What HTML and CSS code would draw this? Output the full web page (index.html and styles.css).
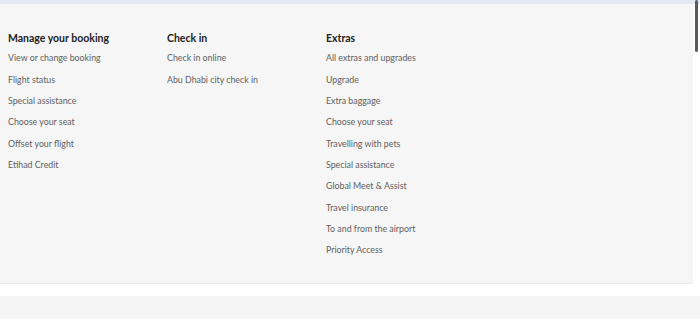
FILE: index.html
```html
<!DOCTYPE html>
<html lang="en">
<head>
  <meta charset="UTF-8">
  <meta name="viewport" content="width=device-width, initial-scale=1.0">
  <title>Manage your booking</title>
  <link rel="stylesheet" href="styles.css">
</head>
<body>
  <div class="top-strip"></div>

  <nav class="mega-menu">
    <div class="menu-column">
      <h3>Manage your booking</h3>
      <ul>
        <li><a href="#">View or change booking</a></li>
        <li><a href="#">Flight status</a></li>
        <li><a href="#">Special assistance</a></li>
        <li><a href="#">Choose your seat</a></li>
        <li><a href="#">Offset your flight</a></li>
        <li><a href="#">Etihad Credit</a></li>
      </ul>
    </div>

    <div class="menu-column">
      <h3>Check in</h3>
      <ul>
        <li><a href="#">Check in online</a></li>
        <li><a href="#">Abu Dhabi city check in</a></li>
      </ul>
    </div>

    <div class="menu-column">
      <h3>Extras</h3>
      <ul>
        <li><a href="#">All extras and upgrades</a></li>
        <li><a href="#">Upgrade</a></li>
        <li><a href="#">Extra baggage</a></li>
        <li><a href="#">Choose your seat</a></li>
        <li><a href="#">Travelling with pets</a></li>
        <li><a href="#">Special assistance</a></li>
        <li><a href="#">Global Meet &amp; Assist</a></li>
        <li><a href="#">Travel insurance</a></li>
        <li><a href="#">To and from the airport</a></li>
        <li><a href="#">Priority Access</a></li>
      </ul>
    </div>
  </nav>

  <div class="next-panel"></div>

  <div class="scroll-thumb"></div>
</body>
</html>
```

FILE: styles.css
```css
/* Booking mega menu */
body {
  margin: 0;
  background-color: #fff;
  font-family: 'Lato', sans-serif;
  height: 319px;
  overflow: hidden;
}

.top-strip {
  height: 4px;
  background-color: #e6e7f4;
}

.mega-menu {
  display: grid;
  grid-template-columns: 159px 159px 1fr;
  margin-right: 7px;
  padding: 23px 8px 21px;
  background-color: #f6f6f6;
  border-bottom: 1px solid #ebebeb;
}

.menu-column h3 {
  margin: 0;
  height: 21.33px;
  line-height: 23px;
  font-size: 10.5px;
  font-weight: 700;
  color: #222;
}

.menu-column ul {
  list-style: none;
  margin: 0;
  padding: 0;
}

.menu-column li {
  height: 21.33px;
  line-height: 19px;
  font-size: 8.8px;
}

.menu-column a {
  color: #606060;
  text-decoration: none;
}

.next-panel {
  margin-top: 12px;
  height: 23px;
  background-color: #f5f5f5;
}

/* drawn scrollbar thumb */
.scroll-thumb {
  position: fixed;
  top: 0;
  right: 2px;
  width: 3px;
  height: 52px;
  background-color: #5a5a5a;
  border-radius: 2px;
}
```
